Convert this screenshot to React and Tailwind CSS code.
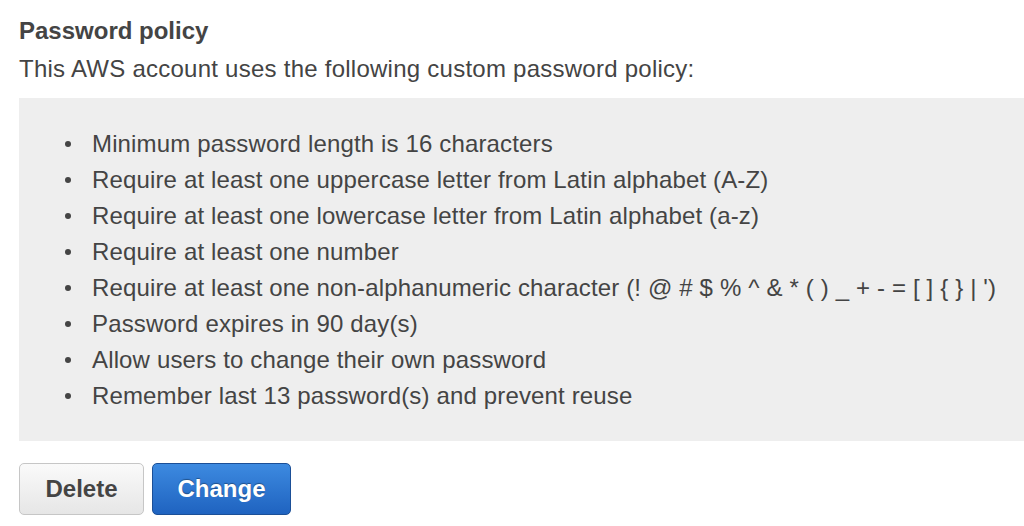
export default function App() {
  const rules = [
    'Minimum password length is 16 characters',
    'Require at least one uppercase letter from Latin alphabet (A-Z)',
    'Require at least one lowercase letter from Latin alphabet (a-z)',
    'Require at least one number',
    "Require at least one non-alphanumeric character (! @ # $ % ^ & * ( ) _ + - = [ ] { } | ')",
    'Password expires in 90 day(s)',
    'Allow users to change their own password',
    'Remember last 13 password(s) and prevent reuse',
  ];

  return (
    <div className="w-[1024px] h-[526px] bg-white overflow-hidden pl-[19px] pt-[17px] text-[#444] font-['Liberation_Sans',Arial,sans-serif]">
      <h2 className="text-[24px] font-bold leading-[28px]">Password policy</h2>
      <p className="text-[24px] tracking-[0.25px] leading-[28px] mt-[10px]">This AWS account uses the following custom password policy:</p>

      {/* Policy box */}
      <div className="bg-[#eeeeee] mt-[15px] h-[343px] pt-[28px]">
        <ul className="text-[24px] tracking-[0.15px] leading-[36px]">
          {rules.map((r) => (
            <li key={r} className="flex items-center">
              <span className="w-[6px] h-[6px] rounded-full bg-[#444] ml-[46px] mr-[21px] shrink-0" />
              <span>{r}</span>
            </li>
          ))}
        </ul>
      </div>

      <div className="flex gap-2 mt-[22px]">
        <button className="w-[125px] h-[52px] rounded-[5px] border border-[#c6c6c6] bg-gradient-to-b from-[#fafafa] to-[#e6e6e6] text-[24px] font-bold text-[#444]">
          Delete
        </button>
        <button className="w-[139px] h-[52px] rounded-[5px] border border-[#1b4f97] bg-gradient-to-b from-[#3d8ae0] to-[#1f63c0] text-[24px] font-bold text-white [text-shadow:0_-1px_1px_rgba(0,0,0,0.35)]">
          Change
        </button>
      </div>
    </div>
  );
}
